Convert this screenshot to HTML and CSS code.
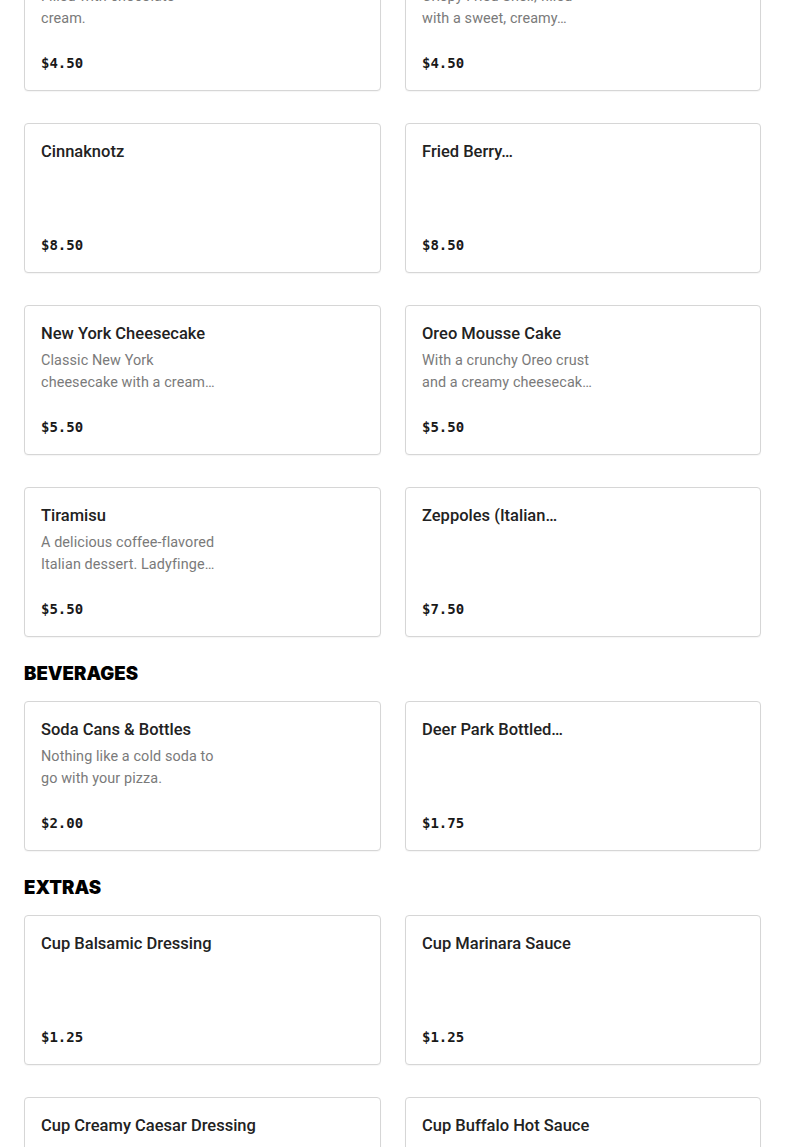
FILE: index.html
```html
<!DOCTYPE html>
<html lang="en">
<head>
<meta charset="utf-8">
<title>Menu</title>
<link rel="stylesheet" href="styles.css">
</head>
<body>
<main class="menu">
  <section class="section section--scrolled">
    <div class="grid">
      <article class="card">
        <h3 class="card__title">Chocolate Cannoli</h3>
        <p class="card__desc">Filled with chocolate<br>cream.</p>
        <p class="card__price">$4.50</p>
      </article>
      <article class="card">
        <h3 class="card__title">Cannoli</h3>
        <p class="card__desc">Crispy Fried Shell, filled<br>with a sweet, creamy…</p>
        <p class="card__price">$4.50</p>
      </article>
      <article class="card">
        <h3 class="card__title">Cinnaknotz</h3>
        <p class="card__price">$8.50</p>
      </article>
      <article class="card">
        <h3 class="card__title">Fried Berry…</h3>
        <p class="card__price">$8.50</p>
      </article>
      <article class="card">
        <h3 class="card__title">New York Cheesecake</h3>
        <p class="card__desc">Classic New York<br>cheesecake with a cream…</p>
        <p class="card__price">$5.50</p>
      </article>
      <article class="card">
        <h3 class="card__title">Oreo Mousse Cake</h3>
        <p class="card__desc">With a crunchy Oreo crust<br>and a creamy cheesecak…</p>
        <p class="card__price">$5.50</p>
      </article>
      <article class="card">
        <h3 class="card__title">Tiramisu</h3>
        <p class="card__desc">A delicious coffee-flavored<br>Italian dessert. Ladyfinge…</p>
        <p class="card__price">$5.50</p>
      </article>
      <article class="card">
        <h3 class="card__title">Zeppoles (Italian…</h3>
        <p class="card__price">$7.50</p>
      </article>
    </div>
  </section>

  <section class="section">
    <h2 class="section__title">BEVERAGES</h2>
    <div class="grid">
      <article class="card">
        <h3 class="card__title">Soda Cans &amp; Bottles</h3>
        <p class="card__desc">Nothing like a cold soda to<br>go with your pizza.</p>
        <p class="card__price">$2.00</p>
      </article>
      <article class="card">
        <h3 class="card__title">Deer Park Bottled…</h3>
        <p class="card__price">$1.75</p>
      </article>
    </div>
  </section>

  <section class="section">
    <h2 class="section__title">EXTRAS</h2>
    <div class="grid">
      <article class="card">
        <h3 class="card__title">Cup Balsamic Dressing</h3>
        <p class="card__price">$1.25</p>
      </article>
      <article class="card">
        <h3 class="card__title">Cup Marinara Sauce</h3>
        <p class="card__price">$1.25</p>
      </article>
      <article class="card">
        <h3 class="card__title">Cup Creamy Caesar Dressing</h3>
        <p class="card__price">$1.25</p>
      </article>
      <article class="card">
        <h3 class="card__title">Cup Buffalo Hot Sauce</h3>
        <p class="card__price">$1.25</p>
      </article>
    </div>
  </section>
</main>
</body>
</html>
```

FILE: styles.css
```css
* { box-sizing: border-box; }

html, body {
  margin: 0;
  padding: 0;
  background: #ffffff;
}

body {
  font-family: Roboto, Inter, "Noto Sans", "Liberation Sans", sans-serif;
  color: #191919;
  overflow: hidden;
}

.menu {
  padding: 0 24px;
  margin-top: -59px;
}

.section__title {
  margin: 24px 0 16px;
  font-family: Inter, "Liberation Sans", sans-serif;
  font-size: 18.6px;
  line-height: 24px;
  font-weight: 900;
  color: #000;
}

.grid {
  display: grid;
  grid-template-columns: 357px 356px;
  column-gap: 24px;
  row-gap: 32px;
}

.card {
  height: 150px;
  display: flex;
  flex-direction: column;
  padding: 16px 16px 17px;
  border: 1px solid #d6d6d6;
  border-radius: 4px;
  box-shadow: 0 1px 1px rgba(0, 0, 0, 0.04);
  background: #fff;
}

.card__title {
  margin: 0;
  font-size: 16.5px;
  line-height: 24px;
  font-weight: 500;
  color: #222;
  white-space: nowrap;
}

.card__desc {
  margin: 4px 0 0;
  font-size: 14.4px;
  line-height: 22px;
  letter-spacing: 0.1px;
  color: #7a7a7a;
}

.card__price {
  margin: auto 0 0;
  font-family: "DejaVu Sans Mono", "Liberation Mono", monospace;
  font-size: 14px;
  line-height: 20px;
  font-weight: 700;
  color: #191919;
}
```
